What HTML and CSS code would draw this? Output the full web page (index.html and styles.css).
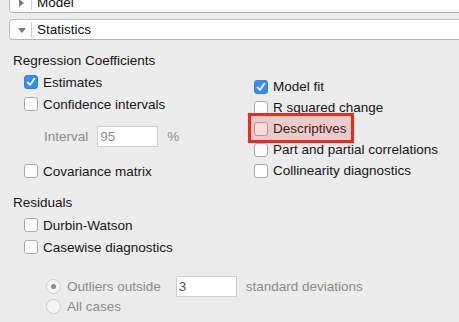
FILE: index.html
```html
<!DOCTYPE html>
<html>
<head>
<meta charset="utf-8">
<link rel="stylesheet" href="styles.css">
</head>
<body>
<div class="accordion">
  <div class="bar bar-model">
    <span class="disclosure"><svg width="8" height="8" viewBox="0 0 8 8"><path d="M1 0 L6 4 L1 8 Z" fill="#7a7a7a"/></svg></span>
    <span class="bar-label">Model</span>
  </div>
  <div class="bar bar-stats">
    <span class="disclosure"><svg width="8" height="8" viewBox="0 0 8 8"><path d="M0 2 L8 2 L4 7 Z" fill="#7a7a7a"/></svg></span>
    <span class="bar-label">Statistics</span>
  </div>
</div>

<div class="content">
  <div class="group-title first">Regression Coefficients</div>
  <div class="cols">
    <div class="col col-left">
      <label class="row"><span class="cb checked"><svg width="14" height="14" viewBox="0 0 14 14"><path d="M3.6 7.4 L6 10 L10.4 3.6" fill="none" stroke="#fff" stroke-width="1.7" stroke-linecap="round" stroke-linejoin="round"/></svg></span>Estimates</label>
      <label class="row"><span class="cb"></span>Confidence intervals</label>
      <div class="interval-row">
        <span class="muted">Interval</span>
        <span class="field field-interval">95</span>
        <span class="muted pct">%</span>
      </div>
      <label class="row row-cov"><span class="cb"></span>Covariance matrix</label>
    </div>
    <div class="col col-right">
      <label class="row r"><span class="cb checked"><svg width="14" height="14" viewBox="0 0 14 14"><path d="M3.6 7.4 L6 10 L10.4 3.6" fill="none" stroke="#fff" stroke-width="1.7" stroke-linecap="round" stroke-linejoin="round"/></svg></span>Model fit</label>
      <label class="row r"><span class="cb"></span>R squared change</label>
      <label class="row r highlighted"><span class="cb"></span>Descriptives<span class="highlight"></span></label>
      <label class="row r"><span class="cb"></span>Part and partial correlations</label>
      <label class="row r"><span class="cb"></span>Collinearity diagnostics</label>
    </div>
  </div>

  <div class="group-title second">Residuals</div>
  <div class="indent">
    <label class="row"><span class="cb"></span>Durbin-Watson</label>
    <label class="row"><span class="cb"></span>Casewise diagnostics</label>
  </div>
  <div class="radios">
    <div class="radio-row first-radio">
      <span class="radio selected"><span class="dot"></span></span>
      <span class="muted">Outliers outside</span>
      <span class="field field-outliers">3</span>
      <span class="muted">standard deviations</span>
    </div>
    <div class="radio-row">
      <span class="radio"></span>
      <span class="muted">All cases</span>
    </div>
  </div>
</div>
</body>
</html>
```

FILE: styles.css
```css
html, body {
  margin: 0;
  padding: 0;
}
body {
  background: #ececec;
  font-family: "Liberation Sans", Arial, sans-serif;
  font-size: 13.5px;
  color: #161616;
  width: 459px;
  height: 322px;
  overflow: hidden;
}

.accordion {
  padding-left: 9px;
  margin-top: -8px;
}
.bar {
  display: flex;
  align-items: center;
  height: 19px;
  background: #fff;
  border: 1px solid #c2c2c2;
  border-bottom-color: #b2b2b2;
  border-right: none;
  border-radius: 4px 0 0 4px;
  margin-right: -10px;
}
.bar-stats {
  margin-top: 6px;
}
.disclosure {
  width: 21px;
  height: 15px;
  border-right: 1px solid #cfcfcf;
  display: flex;
  align-items: center;
  justify-content: center;
  flex-shrink: 0;
}
.disclosure svg {
  display: block;
  margin-left: 2px;
}
.bar-label {
  padding-left: 5px;
  color: #111;
}

.content {
  padding-left: 13px;
}
.group-title {
  line-height: 16px;
  height: 16px;
}
.group-title.first {
  margin-top: 13px;
}
.group-title.second {
  margin-top: 13px;
}

.cols {
  display: grid;
  grid-template-columns: 230px 1fr;
  margin-top: 2px;
}
.col {
  padding-left: 11px;
}
.col-right {
  padding-top: 5px;
}
.indent {
  padding-left: 11px;
  margin-top: 3px;
}

.row {
  display: flex;
  align-items: center;
  height: 22px;
  white-space: nowrap;
}
.row.r {
  height: 21px;
}
.cb {
  width: 12px;
  height: 12px;
  border: 1px solid #a9a9a9;
  border-radius: 3px;
  background: #fff;
  margin-right: 5px;
  flex-shrink: 0;
  position: relative;
}
.cb.checked {
  background: #3a8cf5;
  border-color: #3580e8;
}
.cb.checked svg {
  position: absolute;
  left: -1px;
  top: -1px;
}

.interval-row {
  display: flex;
  align-items: center;
  height: 22px;
  margin-top: 10px;
  padding-left: 20px;
}
.muted {
  color: #8b8b8b;
}
.field {
  display: flex;
  align-items: center;
  background: #fff;
  border: 1px solid #cfcfcf;
  height: 19px;
  padding-left: 2px;
  box-sizing: content-box;
}
.field-interval {
  width: 57px;
  margin-left: 9px;
  color: #8b8b8b;
}
.pct {
  margin-left: 9px;
}
.row-cov {
  margin-top: 13px;
}

.highlighted {
  position: relative;
}
.highlight {
  position: absolute;
  left: -6px;
  top: -5px;
  width: 100px;
  height: 24px;
  border: 3px solid #f5261b;
  background: rgba(240, 60, 40, 0.18);
}

.radios {
  padding-left: 33px;
  margin-top: 18px;
}
.radio-row {
  display: flex;
  align-items: center;
  height: 20px;
  white-space: nowrap;
}
.radio {
  width: 13px;
  height: 13px;
  border: 1px solid #cdcdcd;
  border-radius: 50%;
  background: #f6f6f6;
  margin-right: 6px;
  display: flex;
  align-items: center;
  justify-content: center;
  flex-shrink: 0;
}
.dot {
  width: 5px;
  height: 5px;
  border-radius: 50%;
  background: #8d8d8d;
}
.field-outliers {
  width: 57px;
  margin-left: 15px;
  margin-right: 9px;
  color: #555;
}
```
